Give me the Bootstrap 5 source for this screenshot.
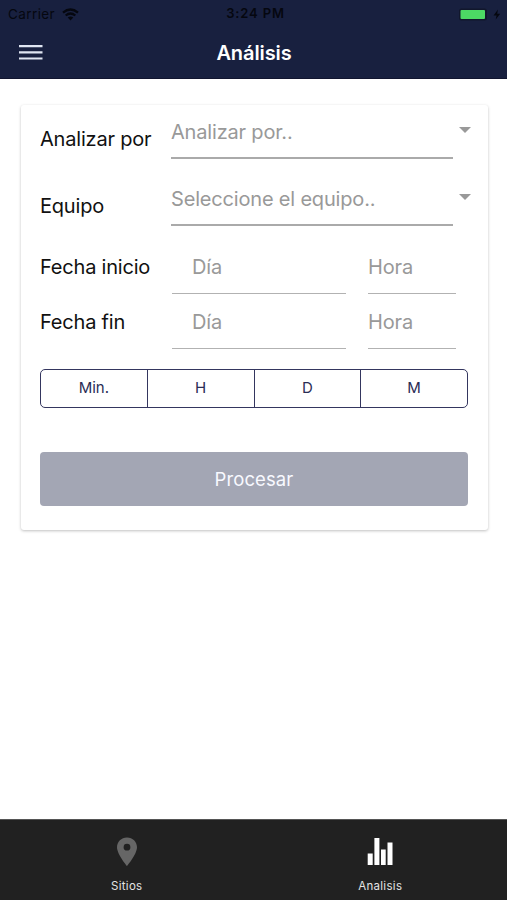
<!DOCTYPE html>
<html lang="es">
<head>
<meta charset="utf-8">
<meta name="viewport" content="width=device-width, initial-scale=1">
<title>Análisis</title>
<link href="https://cdn.jsdelivr.net/npm/bootstrap@5.3.0/dist/css/bootstrap.min.css" rel="stylesheet">
<style>
body{font-family:Inter,"Liberation Sans",sans-serif;background:#fff;height:900px;overflow:hidden;line-height:1.2}
.app-header{background:#18203f;height:79px;border-bottom:1px solid #11152f;color:#fff}
.status-row{height:28px;display:grid;grid-template-columns:1fr auto 1fr;padding:0 6px 0 8px;color:#05070f;font-size:13.5px}
.carrier{letter-spacing:.4px}
.wifi{margin-left:7px}
.clock{font-weight:600;font-size:13px;letter-spacing:.85px;padding-left:2px}
.title-row{height:49px;display:grid;grid-template-columns:1fr auto 1fr;padding:0 19px}
.page-title{font-size:20px;font-weight:600;letter-spacing:-.1px;padding-left:1px}
.panel{margin:26px 19px 0 21px;height:425px;border:0;border-radius:3px;box-shadow:0 1px 3px rgba(0,0,0,.25);padding:0 20px 0 19px}
.field-row{height:55px;font-size:20px;flex-shrink:0}
.field-row>*{flex-shrink:0}
.field-gap{margin-top:13px}
.field-gap-sm{margin-top:12px}
.field-label{width:131px;color:#111;letter-spacing:-.2px;white-space:nowrap;padding-bottom:1px}
.drop{padding-top:13px}
.ph{color:#999;height:54px;border-bottom:1px solid #b2b2b2;white-space:nowrap}
.select-line{width:282px;border-bottom:2px solid #aaa;letter-spacing:-.18px;padding-top:2px}
.day{width:174px;margin-left:1px;padding-left:20px;letter-spacing:-.15px}
.hour{width:88px;margin-left:22px;letter-spacing:-.15px}
.caret{width:12px;height:6px;margin:22px 0 0 6px}
.segments{height:39px;margin-top:19px}
.segments .btn{--bs-btn-color:#2a2c55;--bs-btn-border-color:#34365f;--bs-btn-hover-bg:#eceef5;--bs-btn-hover-color:#2a2c55;--bs-btn-border-radius:5px;border-width:1.5px;font-size:15px;flex:1 1 0;padding:0}
.process{height:54px;margin-top:44px;background:#a3a6b4!important;border:0;border-radius:4px;color:#f8f9ff!important;font-size:18.5px;opacity:1!important;letter-spacing:.1px;padding-top:8px}
.tabs{height:81px;background:#212121;border-top:1px solid #555;color:#e4e4e4;font-size:11.5px}
.tabs svg{margin-top:17px}
.tabs span{margin-top:12px;letter-spacing:.3px}
</style>
<script src="https://cdn.jsdelivr.net/npm/bootstrap@5.3.0/dist/js/bootstrap.bundle.min.js"></script>
</head>
<body class="d-flex flex-column">
<header class="app-header flex-shrink-0">
  <div class="status-row align-items-center">
    <div class="d-flex align-items-center"><span class="carrier">Carrier</span>
      <svg class="wifi" width="17" height="13" viewBox="0 0 17 13" fill="none" stroke="#05070f" stroke-width="2.3"><path d="M1 4.6Q8.5-1.6 16 4.6M3.7 7.5Q8.500 3.400 13.300 7.500"/><path d="M5.700 9.500Q8.500 7.300 11.300 9.500L8.500 12.500Z" fill="#05070f" stroke="none"/></svg>
    </div>
    <span class="clock">3:24 PM</span>
    <div class="d-flex align-items-center justify-content-end">
      <svg width="42" height="13" viewBox="0 0 42 13"><rect x="0" y=".5" width="28" height="12" rx="2.500" fill="#11172c"/><rect x="1.500" y="2" width="24.500" height="9" rx="1" fill="#4cd964"/><path d="M39 1.500L34.500 7.500H37.600L36.700 11.500L41.200 5.700H38.200Z" fill="#05070f"/></svg>
    </div>
  </div>
  <div class="title-row align-items-center">
    <svg width="24" height="16" viewBox="0 0 24 16" stroke="#dfe5f2" stroke-width="2.200"><path d="M0 1.200H23.500M0 7.400H23.500M0 13.500H23.500"/></svg>
    <span class="page-title">Análisis</span>
  </div>
</header>
<main class="flex-grow-1">
  <form class="card panel">
    <div class="field-row d-flex">
      <label class="field-label d-flex align-items-center drop">Analizar por</label>
      <div class="ph select-line d-flex align-items-center">Analizar por..</div>
      <svg class="caret" viewBox="0 0 12 6"><path d="M0 0H12L6 6Z" fill="#999"/></svg>
    </div>
    <div class="field-row field-gap-sm d-flex">
      <label class="field-label d-flex align-items-center drop">Equipo</label>
      <div class="ph select-line d-flex align-items-center">Seleccione el equipo..</div>
      <svg class="caret" viewBox="0 0 12 6"><path d="M0 0H12L6 6Z" fill="#999"/></svg>
    </div>
    <div class="field-row field-gap d-flex">
      <label class="field-label d-flex align-items-center">Fecha inicio</label>
      <div class="ph day d-flex align-items-center">Día</div>
      <div class="ph hour d-flex align-items-center">Hora</div>
    </div>
    <div class="field-row d-flex">
      <label class="field-label d-flex align-items-center">Fecha fin</label>
      <div class="ph day d-flex align-items-center">Día</div>
      <div class="ph hour d-flex align-items-center">Hora</div>
    </div>
    <div class="btn-group segments">
      <button type="button" class="btn">Min.</button>
      <button type="button" class="btn">H</button>
      <button type="button" class="btn">D</button>
      <button type="button" class="btn">M</button>
    </div>
    <button type="button" class="btn process" disabled>Procesar</button>
  </form>
</main>
<nav class="tabs d-flex flex-shrink-0">
  <div class="flex-fill w-50 d-flex flex-column align-items-center">
    <svg width="22" height="31" viewBox="0 0 22 31"><path fill="#666" fill-rule="evenodd" d="M11 .5C5.300 .5 1 4.800 1 10.200C1 17.300 11 29 11 29S21 17.300 21 10.200C21 4.800 16.700 .5 11 .5ZM11 6.800A3.400 3.400 0 1 1 11 13.600A3.400 3.400 0 1 1 11 6.800Z"/></svg>
    <span>Sitios</span>
  </div>
  <div class="flex-fill w-50 d-flex flex-column align-items-center">
    <svg width="26" height="31" viewBox="0 0 26 31" fill="#fff"><path d="M.7 16.500H5.700V28H.7ZM7.400 1H12.400V28H7.400ZM14 12.500H18.700V28H14ZM20.500 5.500H25.500V28H20.500Z"/></svg>
    <span>Analisis</span>
  </div>
</nav>
</body>
</html>
